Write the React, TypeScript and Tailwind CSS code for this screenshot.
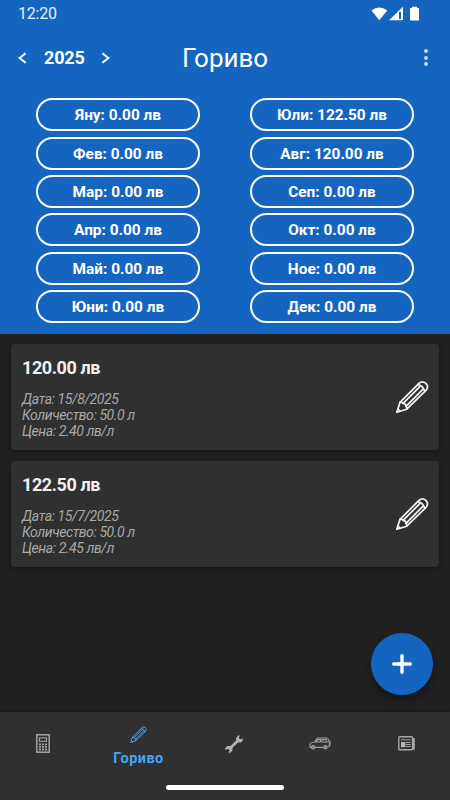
import React from 'react';

interface Month {
  name: string;
  total: string;
}

interface FuelEntry {
  id: string;
  total: string;
  date: string;
  quantity: string;
  price: string;
}

const months: Month[] = [
  { name: 'Яну', total: '0.00' },
  { name: 'Фев', total: '0.00' },
  { name: 'Мар', total: '0.00' },
  { name: 'Апр', total: '0.00' },
  { name: 'Май', total: '0.00' },
  { name: 'Юни', total: '0.00' },
  { name: 'Юли', total: '122.50' },
  { name: 'Авг', total: '120.00' },
  { name: 'Сеп', total: '0.00' },
  { name: 'Окт', total: '0.00' },
  { name: 'Ное', total: '0.00' },
  { name: 'Дек', total: '0.00' },
];

const entries: FuelEntry[] = [
  { id: '1', total: '120.00', date: '15/8/2025', quantity: '50.0', price: '2.40' },
  { id: '2', total: '122.50', date: '15/7/2025', quantity: '50.0', price: '2.45' },
];

function PencilIcon({ className, strokeWidth = 1.7 }: { className?: string; strokeWidth?: number }) {
  return (
    <svg
      viewBox="0 0 34 34"
      className={className}
      fill="none"
      stroke="currentColor"
      strokeWidth={strokeWidth}
      strokeLinejoin="round"
      strokeLinecap="round"
    >
      <path d="M1.8 32.2 L5 22.4 L24.2 3.1 Q27.4 .4 30.9 3.4 Q34 7 31.2 10.2 L11.7 29.2 Z" />
      <path d="M22.9 4.6 Q28.2 5.8 29.8 11.4" />
      <path d="M5 22.4 Q7.4 21.8 8.1 23.4 Q10.9 23.6 11 26.3 Q12.2 27 11.7 29.2" />
      <path d="M8.1 23.4 L24.8 6.6 M11 26.3 L27.6 9.6" />
      <path d="M3 29 L5 31" />
    </svg>
  );
}

function StatusBar() {
  return (
    <div className="flex h-[27px] items-center justify-between pl-[18px] pr-[30px]">
      <span className="text-[16px] leading-5 tracking-[-0.2px] text-[#e6effa]">12:20</span>
      <svg width="49" height="16" viewBox="0 0 49 16" fill="currentColor">
        <path d="M.5 4.5 Q8.2 -1.5 16.2 4.5 L8.3 14.3 Z" />
        <path d="M18 14.2 L32 .8 V14.2 Z" />
        <path d="M28 5.8 h2 v7.2 h-2 z" fill="#1565c0" />
        <path d="M41 .8 h5 v1.3 h1.3 q.7 0 .7 .8 v10.8 q0 .9 -.8 .9 h-7.4 q-.8 0 -.8 -.9 v-10.8 q0 -.8 .8 -.8 h1.2 z" />
      </svg>
    </div>
  );
}

function Header() {
  return (
    <header className="h-[334px] shrink-0 bg-[#1565c0] text-white">
      <StatusBar />
      <div className="flex h-[61px] items-center">
        <svg className="ml-[18px]" width="9" height="12" viewBox="0 0 9 12" fill="none" stroke="currentColor" strokeWidth="2">
          <path d="M7.7 1.2 L1.5 6 L7.7 10.8" />
        </svg>
        <span className="ml-[17px] w-10 pt-px text-[18px] leading-6 font-bold tracking-[-0.2px]">2025</span>
        <svg className="ml-[17px]" width="9" height="12" viewBox="0 0 9 12" fill="none" stroke="currentColor" strokeWidth="2">
          <path d="M1.3 1.2 L7.5 6 L1.3 10.8" />
        </svg>
        <h1 className="ml-[72px] pt-px text-[26px] leading-8">Гориво</h1>
        <div className="mr-[22px] ml-auto flex flex-col gap-[2.5px]">
          <i className="size-[4px] rounded-full bg-[#c4d7ee]" />
          <i className="size-[4px] rounded-full bg-[#c4d7ee]" />
          <i className="size-[4px] rounded-full bg-[#c4d7ee]" />
        </div>
      </div>
      <div className="mt-[10.4px] grid grid-flow-col grid-cols-[164px_164px] grid-rows-[repeat(6,33px)] gap-x-[50px] gap-y-[5.3px] pl-9">
        {months.map((month) => (
          <div
            key={month.name}
            className="flex items-center justify-center rounded-full border-2 border-white pt-px text-[15.4px] leading-5 font-bold"
          >
            {month.name}: {month.total} лв
          </div>
        ))}
      </div>
    </header>
  );
}

function EntryCard({ entry }: { entry: FuelEntry }) {
  return (
    <article className="flex h-[106px] items-center justify-between rounded bg-[#303030] pr-[10px] pl-[11px] shadow-[0_2px_5px_rgba(0,0,0,0.35)]">
      <div className="self-start pt-[12px]">
        <h2 className="text-[18px] leading-6 font-bold tracking-[-0.4px] text-[#f1f1f1]">{entry.total} лв</h2>
        <div className="mt-[11px] text-[14px] leading-4 tracking-[-0.42px] text-[#a8a8a8] italic">
          <p>Дата: {entry.date}</p>
          <p>Количество: {entry.quantity} л</p>
          <p>Цена: {entry.price} лв/л</p>
        </div>
      </div>
      <PencilIcon className="size-[34px] text-[#f5f5f5]" />
    </article>
  );
}

function CalculatorIcon() {
  return (
    <svg width="14" height="19" viewBox="0 0 14 19" fill="none">
      <rect x=".8" y=".8" width="12.4" height="17.4" stroke="#a5a5a5" strokeWidth="1.5" />
      <rect x="3.5" y="3.9" width="7" height="3.4" stroke="#a5a5a5" strokeWidth="1.1" />
      <path d="M3 10.3 h2 M6 10.3 h2 M9 10.3 h2 M3 12.9 h2 M6 12.9 h2 M9 12.9 h2 M3 15.5 h2 M6 15.5 h2 M9 15.5 h2" stroke="#a5a5a5" strokeWidth="1.8" />
    </svg>
  );
}

function WrenchIcon() {
  return (
    <svg width="18" height="18" viewBox="0 0 18 18" fill="#b0b0b0">
      <path d="M13.8 .2 L11.1 2.5 V5.5 L5.3 11 H2.2 L.1 13.3 L.5 14.7 L3 13.9 L4.4 15.2 L3.5 17.5 L5 17.9 L7.4 15.8 V13.1 L13.1 7.4 H15.9 L18 5 L17.6 3.5 L15.1 4.3 L13.8 3 L14.9 .5 Z" />
    </svg>
  );
}

function CarIcon() {
  return (
    <svg width="22" height="13" viewBox="0 0 22 13" fill="none" stroke="#a0a0a0" strokeWidth="1.1">
      <path d="M2.2 10.4 H1 V7 Q1.2 5.6 5.5 5 L7.7 1.7 Q8.1 1 9.2 1 H17.4 Q18.8 1 19.4 2.5 L20.3 5.5 V9.8 H18.6 M6.2 10.4 H14.2" />
      <path d="M6.8 5 H11.5 V2.6 H8.8 Z M13 5 V2.6 H17.1 L18.1 5 Z M21.1 3.8 V8.2" />
      <circle cx="4.2" cy="10.3" r="1.7" fill="#777" />
      <circle cx="16.4" cy="10.3" r="1.7" fill="#777" />
    </svg>
  );
}

function NewsIcon() {
  return (
    <svg width="18" height="15" viewBox="0 0 18 15" fill="none" stroke="#a7a7a7">
      <rect x=".8" y=".8" width="13.7" height="12.9" rx="1" strokeWidth="1.4" />
      <path d="M15.6 2 v11.7" strokeWidth="2.4" />
      <path d="M3 3.8 h9.5 M8 6.5 h4.5 M8 8.5 h4.5 M8 10.5 h4.5" strokeWidth="1" />
      <rect x="3" y="6" width="4.4" height="5.2" fill="#b8b8b8" stroke="none" />
    </svg>
  );
}

function BottomNav() {
  return (
    <nav className="flex h-[88px] shrink-0 flex-col items-center bg-[#303030] shadow-[0_-1px_3px_rgba(0,0,0,0.3)]">
      <div className="grid h-[63px] w-full grid-cols-[86px_105px_86px_86px_87px] items-center justify-items-center">
        <CalculatorIcon />
        <div className="flex flex-col items-center pt-[6px] text-[#42a5f5]">
          <PencilIcon className="size-[17px]" strokeWidth={2} />
          <span className="mt-[6px] text-[14.5px] leading-[19px] font-bold tracking-[0.45px]">Гориво</span>
        </div>
        <WrenchIcon />
        <CarIcon />
        <NewsIcon />
      </div>
      <div className="mt-[10px] h-[4.5px] w-[118px] rounded-full bg-white" />
    </nav>
  );
}

export default function App() {
  return (
    <div className="relative flex h-[800px] w-[450px] flex-col overflow-hidden bg-[#212121] font-['Roboto',sans-serif]">
      <Header />
      <main className="flex flex-1 flex-col gap-[11px] px-[11px] pt-[10.4px]">
        {entries.map((entry) => (
          <EntryCard key={entry.id} entry={entry} />
        ))}
      </main>
      <BottomNav />
      {/* Add entry */}
      <button className="absolute right-[17px] bottom-[105px] flex size-[62px] items-center justify-center rounded-full bg-[#1565c0] text-white shadow-[0_4px_8px_rgba(0,0,0,0.4)]">
        <svg width="20" height="20" viewBox="0 0 20 20" stroke="currentColor" strokeWidth="3.3" strokeLinecap="round">
          <path d="M10 1.7 V18.3 M1.7 10 H18.3" />
        </svg>
      </button>
    </div>
  );
}
